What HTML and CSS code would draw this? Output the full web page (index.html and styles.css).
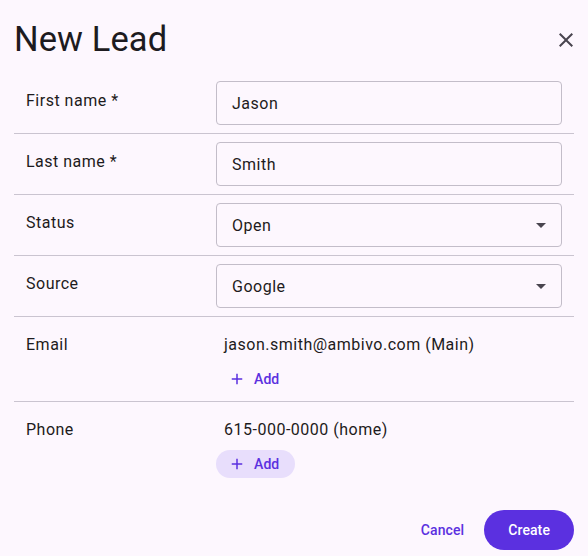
FILE: index.html
```html
<!DOCTYPE html>
<html lang="en">
<head>
<meta charset="utf-8">
<title>New Lead</title>
<link rel="stylesheet" href="styles.css">
</head>
<body>
<div class="dialog">
  <div class="header">
    <h1 class="title">New Lead</h1>
    <button class="close" aria-label="Close">
      <svg viewBox="0 0 24 24" width="24" height="24"><path d="M19 6.41 17.59 5 12 10.59 6.41 5 5 6.41 10.59 12 5 17.59 6.41 19 12 13.41 17.59 19 19 17.59 13.41 12z" fill="#49454f"/></svg>
    </button>
  </div>

  <div class="row">
    <div class="label">First name *</div>
    <div class="field"><span class="field-text">Jason</span></div>
  </div>
  <div class="row">
    <div class="label">Last name *</div>
    <div class="field"><span class="field-text">Smith</span></div>
  </div>
  <div class="row">
    <div class="label">Status</div>
    <div class="field select"><span class="field-text">Open</span>
      <svg class="arrow" viewBox="0 0 24 24" width="24" height="24"><path d="M7 10l5 5 5-5z" fill="#49454f"/></svg>
    </div>
  </div>
  <div class="row">
    <div class="label">Source</div>
    <div class="field select"><span class="field-text">Google</span>
      <svg class="arrow" viewBox="0 0 24 24" width="24" height="24"><path d="M7 10l5 5 5-5z" fill="#49454f"/></svg>
    </div>
  </div>
  <div class="row">
    <div class="label">Email</div>
    <div class="value">
      <div class="value-text">jason.smith@ambivo.com (Main)</div>
      <button class="add">
        <svg viewBox="0 0 24 24" width="18" height="18"><path d="M19 13h-6v6h-2v-6H5v-2h6V5h2v6h6v2z" fill="currentColor"/></svg>
        <span>Add</span>
      </button>
    </div>
  </div>
  <div class="row last">
    <div class="label">Phone</div>
    <div class="value">
      <div class="value-text">615-000-0000 (home)</div>
      <button class="add tonal">
        <svg viewBox="0 0 24 24" width="18" height="18"><path d="M19 13h-6v6h-2v-6H5v-2h6V5h2v6h6v2z" fill="currentColor"/></svg>
        <span>Add</span>
      </button>
    </div>
  </div>

  <div class="footer">
    <button class="btn-text">Cancel</button>
    <button class="btn-filled">Create</button>
  </div>
</div>
</body>
</html>
```

FILE: styles.css
```css
* { box-sizing: border-box; }
html, body {
  margin: 0;
  padding: 0;
  background: #fdf7fe;
  font-family: Roboto, "Noto Sans", sans-serif;
  color: #1d1b20;
}
.dialog {
  width: 588px;
  height: 556px;
  padding: 19px 14px 0 14px;
}
.header {
  display: flex;
  align-items: center;
  justify-content: space-between;
  margin-bottom: 14px;
}
.title {
  margin: 0;
  font-size: 34.5px;
  font-weight: 400;
  line-height: 40px;
  letter-spacing: 0.1px;
}
.close {
  border: 0;
  background: none;
  padding: 0;
  width: 24px;
  height: 24px;
  margin-right: -4px;
  margin-top: 2px;
  display: flex;
}
.row {
  display: grid;
  grid-template-columns: 190px 1fr;
  padding: 8px 12px;
  border-bottom: 1px solid #cac4d0;
}
.row.last { border-bottom: 0; }
.label {
  font-size: 16px;
  line-height: 24px;
  padding-top: 8px;
  letter-spacing: 0.5px;
}
.field {
  height: 44px;
  border: 1px solid #c3bdc9;
  border-radius: 4px;
  display: flex;
  align-items: center;
  padding: 0 15px;
  font-size: 16px;
  letter-spacing: 0.5px;
}
.field.select {
  justify-content: space-between;
  padding-right: 8px;
}
.value {
  display: flex;
  flex-direction: column;
  align-items: flex-start;
}
.value-text {
  font-size: 16px;
  line-height: 24px;
  padding: 8px 8px 0 8px;
  letter-spacing: 0.5px;
}
.add {
  margin-top: 8px;
  height: 28px;
  display: flex;
  align-items: center;
  gap: 8px;
  padding: 0 16px 0 12px;
  border: 0;
  border-radius: 14px;
  background: transparent;
  color: #5b30e0;
  font-family: Roboto, sans-serif;
  font-size: 14px;
  font-weight: 500;
  letter-spacing: 0.1px;
}
.add.tonal { background: #e8defc; }
.add svg { display: block; }
.footer {
  display: flex;
  justify-content: flex-end;
  gap: 8px;
  margin-top: 24px;
}
.btn-text, .btn-filled {
  height: 40px;
  border: 0;
  border-radius: 20px;
  font-family: Roboto, sans-serif;
  font-size: 14px;
  font-weight: 500;
  letter-spacing: 0.1px;
  padding: 0 12px;
}
.btn-text {
  background: transparent;
  color: #5b30e0;
}
.btn-filled {
  background: #5b30e0;
  color: #ffffff;
  padding: 0 24px;
}
```
